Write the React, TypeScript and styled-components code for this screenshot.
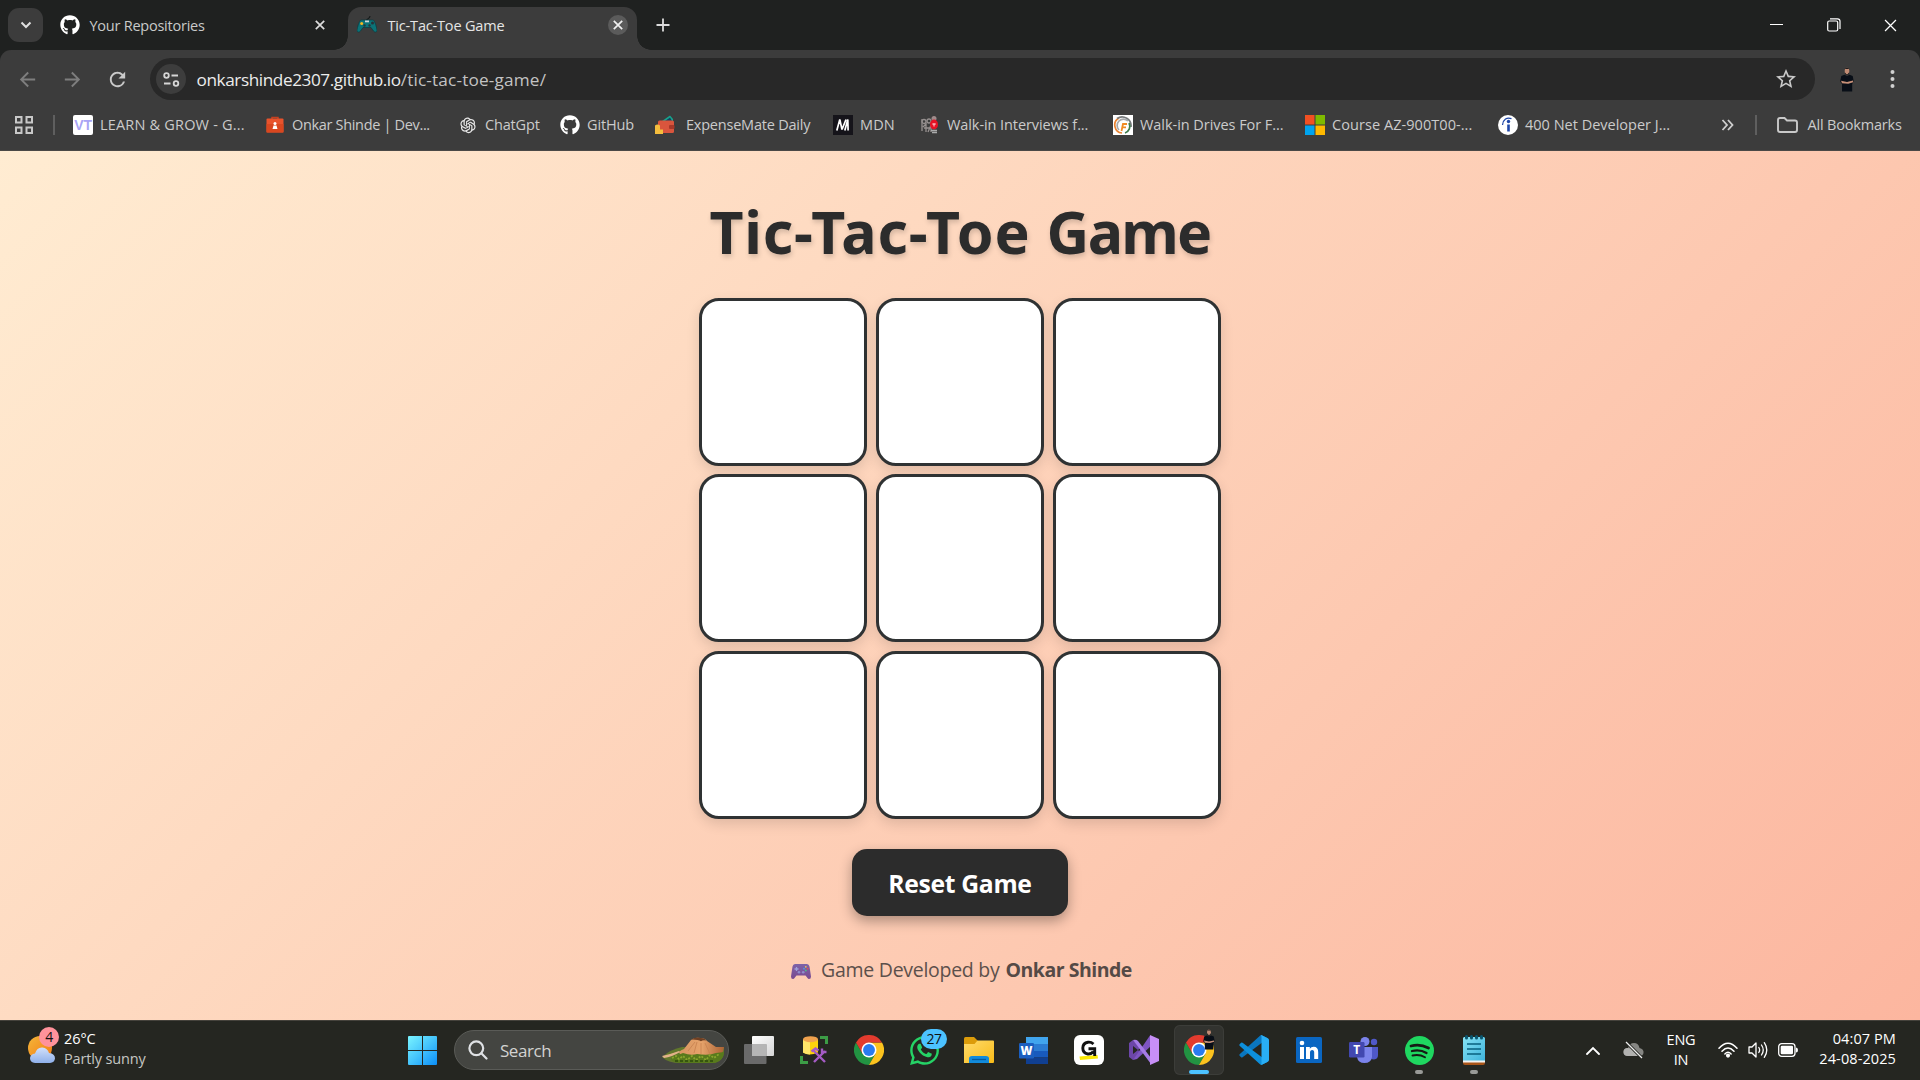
import React from "react";
import styled, { createGlobalStyle, css } from "styled-components";
import { FaGithub, FaWhatsapp } from "react-icons/fa6";
import { AiOutlineOpenAI } from "react-icons/ai";
import { MdArrowBack, MdArrowForward, MdRefresh, MdStarBorder } from "react-icons/md";

const ui = `"Segoe UI", "Open Sans", "Noto Sans", sans-serif`;

const GlobalStyle = createGlobalStyle`
  *, *::before, *::after { box-sizing: border-box; }
  body { margin: 0; overflow: hidden; font-family: ${ui}; background: #1f2120; }
  button { font-family: inherit; border: 0; padding: 0; background: none; color: inherit; }
  svg { display: block; flex: none; }
`;

const Screen = styled.div`
  width: 1920px;
  height: 1080px;
  display: flex;
  flex-direction: column;
  overflow: hidden;
`;

/* ---------- Tab strip ---------- */

const TabStrip = styled.header`
  height: 50px;
  flex: none;
  display: flex;
  align-items: flex-start;
  background: #1f2120;
  color: #dededc;
`;

const TabSearch = styled.button`
  width: 35px;
  height: 34px;
  margin: 8px 0 0 8px;
  border-radius: 11px;
  background: #3c3c3c;
  display: grid;
  place-items: center;
`;

const Tab = styled.div<{ $active?: boolean }>`
  position: relative;
  display: flex;
  align-items: center;
  font-size: 14.5px;
  ${(p) =>
    p.$active
      ? css`
          width: 289px;
          height: 43px;
          margin-top: 7px;
          padding: 0 9px 7px 9px;
          border-radius: 13px 13px 0 0;
          background: #3c3c3c;
          color: #e6e6e6;
          &::before,
          &::after {
            content: "";
            position: absolute;
            bottom: 0;
            width: 14px;
            height: 14px;
          }
          &::before {
            left: -14px;
            background: radial-gradient(circle at 0 0, transparent 13.5px, #3c3c3c 14px);
          }
          &::after {
            right: -14px;
            background: radial-gradient(circle at 100% 0, transparent 13.5px, #3c3c3c 14px);
          }
        `
      : css`
          width: 305px;
          height: 50px;
          padding: 0 23px 0 17px;
          color: #c9cac9;
        `}
`;

const TabTitle = styled.span<{ $left: number; $track: number }>`
  flex: 1;
  margin-left: ${(p) => p.$left}px;
  letter-spacing: ${(p) => p.$track}px;
  white-space: nowrap;
`;

const CloseTab = styled.button<{ $filled?: boolean }>`
  width: ${(p) => (p.$filled ? 20 : 10)}px;
  height: 20px;
  border-radius: 50%;
  background: ${(p) => (p.$filled ? "#5b5b5b" : "transparent")};
  display: grid;
  place-items: center;
`;

const NewTab = styled.button`
  width: 26px;
  height: 50px;
  margin-left: 13px;
  display: grid;
  place-items: center;
`;

const WindowControls = styled.div`
  margin-left: auto;
  display: flex;
  height: 50px;
  padding-right: 1px;
`;

const WindowButton = styled.button`
  width: 57px;
  display: grid;
  place-items: center;
`;

/* ---------- Toolbar ---------- */

const Chrome = styled.div`
  height: 101px;
  flex: none;
  background: #3c3c3c;
  border-radius: 11px 11px 0 0;
  border-bottom: 1px solid #4a4846;
`;

const Toolbar = styled.nav`
  height: 58px;
  display: flex;
  align-items: center;
  padding: 0 0 0 16px;
`;

const NavButton = styled.button<{ $dim?: boolean; $gap: number }>`
  width: 23px;
  height: 23px;
  margin-right: ${(p) => p.$gap}px;
  color: ${(p) => (p.$dim ? "#7e7e7e" : "#c9c9c9")};
  font-size: 23px;
`;

const AddressBar = styled.div`
  width: 1665px;
  height: 42px;
  border-radius: 21px;
  background: #282828;
  display: flex;
  align-items: center;
  padding: 0 17px 0 6px;
  color: #c9c9c9;
`;

const SiteInfo = styled.span`
  width: 30px;
  height: 30px;
  border-radius: 50%;
  background: #3d3d3d;
  display: grid;
  place-items: center;
`;

const Url = styled.span`
  flex: 1;
  margin-left: 10.5px;
  font-size: 17.2px;
  letter-spacing: 0.17px;
  color: #c3c3c3;
  b {
    font-weight: 400;
    color: #ececec;
    letter-spacing: -0.42px;
  }
`;

const Profile = styled.span`
  margin-left: 25px;
`;

const MenuDots = styled.span`
  margin-left: 36px;
`;

const Bookmarks = styled.div`
  height: 34px;
  display: flex;
  align-items: center;
  font-size: 14.5px;
  color: #cbcbcb;
  padding-left: 15px;
`;

const BarDivider = styled.i<{ $l: number; $r: number }>`
  width: 2px;
  height: 20px;
  margin: 0 ${(p) => p.$r}px 0 ${(p) => p.$l}px;
  background: #5f5f5f;
`;

const Bookmark = styled.span<{ $w: number; $gap?: number; $track: number }>`
  width: ${(p) => p.$w}px;
  display: flex;
  align-items: center;
  gap: ${(p) => p.$gap ?? 7}px;
  letter-spacing: ${(p) => p.$track}px;
  white-space: nowrap;
`;

const BookmarkLabel = styled.span`
  padding-bottom: 2px;
`;

/* ---------- Game page ---------- */

const Page = styled.main`
  height: 869px;
  flex: none;
  display: flex;
  flex-direction: column;
  align-items: center;
  background: linear-gradient(135deg, #ffecd2, #fcb69f);
`;

const Title = styled.h1`
  margin: 39px 0 0;
  height: 82px;
  line-height: 82px;
  font-family: "Segoe UI", "Noto Sans", sans-serif;
  font-size: 59px;
  font-weight: 700;
  letter-spacing: 0.8px;
  color: #2c2c2c;
  text-shadow: 1px 3px 5px rgba(0, 0, 0, 0.17);
  white-space: nowrap;
`;

const TitleEnd = styled.span`
  letter-spacing: -1.7px;
`;

const Board = styled.div`
  margin-top: 26px;
  display: grid;
  grid-template-columns: repeat(3, 168px);
  grid-auto-rows: 168px;
  gap: 8.4px 9px;
`;

const Cell = styled.button`
  border: 3px solid #2f3233;
  border-radius: 20px;
  background: #fff;
  box-shadow: 0 5px 13px rgba(0, 0, 0, 0.12);
`;

const ResetButton = styled.button`
  margin-top: 30px;
  width: 216px;
  height: 67px;
  padding-top: 2px;
  border-radius: 15px;
  background: #2c2c2c;
  color: #fff;
  font-size: 24.7px;
  font-weight: 700;
  letter-spacing: -0.32px;
  box-shadow: 0 5px 13px rgba(0, 0, 0, 0.32);
`;

const Credit = styled.p`
  margin: 40px 0 0;
  padding-left: 3px;
  height: 28px;
  display: flex;
  align-items: center;
  font-size: 19.5px;
  letter-spacing: -0.28px;
  color: #5c504b;
  white-space: nowrap;
  svg { margin: 4px 10px 0 0; }
  strong { margin-left: 6px; color: #554a46; letter-spacing: -0.49px; }
`;

/* ---------- Taskbar ---------- */

const Taskbar = styled.footer`
  height: 60px;
  flex: none;
  display: flex;
  align-items: center;
  background: #252621;
  box-shadow: inset 0 1px #45423c;
  color: #fff;
`;

const Weather = styled.div`
  width: 380px;
  padding-left: 27px;
  display: flex;
  align-items: center;
  gap: 8px;
`;

const WeatherText = styled.div`
  padding-bottom: 2px;
  font-size: 14.5px;
  line-height: 20px;
  letter-spacing: -0.15px;
  color: #c5c6c3;
  b { display: block; font-weight: 400; color: #fff; letter-spacing: -0.1px; }
`;

const Badge = styled.span<{ $w: number; $x: number; $y: number; $bg: string }>`
  position: absolute;
  left: ${(p) => p.$x}px;
  top: ${(p) => p.$y}px;
  width: ${(p) => p.$w}px;
  height: 20px;
  line-height: 20px;
  border-radius: 10px;
  text-align: center;
  font-size: 14px;
  letter-spacing: -0.4px;
  color: #111;
  background: ${(p) => p.$bg};
`;

const Glyph = styled.span`
  position: relative;
  display: block;
`;

const Start = styled.button`
  width: 74px;
  padding-left: 28px;
`;

const SearchBox = styled.div`
  width: 275px;
  height: 40px;
  border-radius: 20px;
  background: #444541;
  border: 1px solid #5a5b57;
  display: flex;
  align-items: center;
  padding: 0 3px 0 13px;
  font-size: 17px;
  letter-spacing: -0.45px;
  color: #d3d3d1;
  overflow: hidden;
`;

const SearchLabel = styled.span`
  flex: 1;
  margin-left: 12px;
`;

const Apps = styled.div`
  display: flex;
  gap: 5px;
  margin-left: 5px;
`;

const TaskApp = styled.span<{ $active?: boolean; $running?: boolean }>`
  position: relative;
  width: 50px;
  height: 50px;
  border-radius: 6px;
  display: grid;
  place-items: center;
  ${(p) => p.$active && "background: #32332f; box-shadow: inset 0 0 0 1px #3c3d39;"}
  ${(p) =>
    (p.$active || p.$running) &&
    css`
      &::after {
        content: "";
        position: absolute;
        bottom: 1px;
        left: ${p.$active ? 15 : 21}px;
        width: ${p.$active ? 20 : 8}px;
        height: 4px;
        border-radius: 2px;
        background: ${p.$active ? "#4cc2ff" : "#999a97"};
      }
    `}
`;

const AppAvatar = styled.span`
  position: absolute;
  left: 29px;
  top: 4px;
`;

const LetterTile = styled.span`
  width: 20px;
  height: 20px;
  background: #fff;
  color: #a9a4f5;
  font: 700 14px/1 "Liberation Sans", sans-serif;
  letter-spacing: -0.3px;
  display: grid;
  place-items: center;
  border-radius: 2px;
`;

const Tray = styled.div`
  margin-left: auto;
  display: flex;
  align-items: center;
  padding-right: 24px;
  font-size: 14.5px;
  line-height: 20px;
`;

const Spaced = styled.span<{ $l: number }>`
  margin-left: ${(p) => p.$l}px;
`;

const Language = styled.div`
  width: 30px;
  margin-left: 22px;
  text-align: center;
  letter-spacing: -0.25px;
  line-height: 20px;
`;

const Clock = styled.div`
  width: 80px;
  margin-left: 18px;
  padding-bottom: 2px;
  text-align: right;
  letter-spacing: 0.1px;
  white-space: nowrap;
`;

/* ---------- Drawings ---------- */

const Cross = ({ s = 10, w = 2, c = "#dcdcdc" }) => (
  <svg width={s} height={s} viewBox="0 0 10 10">
    <path d="M.8.8 9.2 9.2M9.2.8.8 9.2" stroke={c} strokeWidth={w} fill="none" />
  </svg>
);

const TealPad = () => (
  <svg width="20" height="20" viewBox="0 0 20 20">
    <path d="M10 6C8.500 4 13 4 13 1" stroke="#161b1b" strokeWidth="1.200" fill="none" />
    <path d="M4 5h12c1.500 0 4 8 4 10.500 0 2-2.500 2-3.500.5L14 12.500H6L3.500 16C2.500 17.500 0 17.500 0 15.500 0 13 2.500 5 4 5Z" fill="#0b7378" stroke="#0c3b40" strokeWidth=".7" />
    <circle cx="4.700" cy="8.500" r="1.500" fill="#f4b91f" />
    <circle cx="15.500" cy="8" r="1.500" fill="#263238" />
    <path d="M8 5.500h4v1.800H8z" fill="#cfd8d8" />
    <circle cx="7.500" cy="10.500" r="1.200" fill="#24383c" />
    <circle cx="12.500" cy="10.500" r="1.200" fill="#24383c" />
  </svg>
);

const Tune = () => (
  <svg width="17" height="15" viewBox="0 0 17 15" fill="none" stroke="#d6d6d6" strokeWidth="2">
    <circle cx="3.500" cy="3.500" r="2.300" strokeWidth="1.800" />
    <path d="M8.500 3.500H15M1 11.500h6.500" />
    <circle cx="13" cy="11.500" r="2.300" strokeWidth="1.800" />
  </svg>
);

const Person = ({ w = 14, h = 25 }) => (
  <svg width={w} height={h} viewBox="0 0 14 25">
    <ellipse cx="7" cy="4" rx="2.300" ry="3.300" fill="#c08b74" />
    <path d="M4.600 3C4.500 0 9.500 0 9.400 3L9 1.900H5ZM5 5.500 7 8l2-2.500V7L7 8.500 5 7Z" fill="#211c1c" />
    <path d="M4.500 7.800 1.300 9 .2 14.500 2 17v7.500h10.200V17l1.500-2.500-1-5.500L9.500 7.800 7 9Z" fill="#080e17" />
    <path d="m1 13.800 6 1.200 6-1.400.2 1.700-5 1.500L2 16.300Z" fill="#c68f78" />
  </svg>
);

const AppsGrid = () => (
  <svg width="18" height="18" viewBox="0 0 18 18" fill="none" stroke="#c8c8c8" strokeWidth="2">
    <path d="M1 1h5.500v5.500H1zM11.500 1H17v5.500h-5.500zM1 11.500h5.500V17H1zM11.500 11.500H17V17h-5.500z" />
  </svg>
);

const Portfolio = () => (
  <svg width="20" height="20" viewBox="0 0 20 20">
    <path d="M7 4V2.500h6V4" stroke="#c6401f" strokeWidth="1.500" fill="none" />
    <rect x="1.500" y="3.500" width="17" height="14" rx="1" fill="#e8532c" />
    <path d="M1.500 9h17v8.500h-17z" fill="#d9471f" />
    <circle cx="10" cy="8.500" r="1.500" fill="#fff" />
    <path d="M7.500 14 8.500 10.500h3l1 3.500Z" fill="#fff" />
  </svg>
);

const Wallet = () => (
  <svg width="20" height="20" viewBox="0 0 20 20">
    <path d="m7 6 8-5.500L18 4v3H6Z" fill="#16a58d" />
    <path d="m10 6 5-3.500 2 3.500Z" fill="#153f61" />
    <rect x="3" y="5.500" width="16" height="12.500" rx="1.500" fill="#d9553d" />
    <rect x="14" y="10" width="5.500" height="4" rx="1" fill="#a93829" />
    <path d="M0 10.500q2.500-2 5 0V19H0ZM4 14.500h4V19H4Z" fill="#f5bd3d" />
  </svg>
);

const Mdn = () => (
  <svg width="20" height="20" viewBox="0 0 20 20">
    <rect width="20" height="20" fill="#15141a" />
    <path d="m3.800 15.500 3-11 2.200 10 4-10M11.800 15.500l3-11 .3 11" stroke="#fff" strokeWidth="1.700" fill="none" strokeLinejoin="bevel" />
  </svg>
);

const Crowd = () => (
  <svg width="20" height="20" viewBox="0 0 20 20">
    <g fill="none" stroke="#96908f" strokeWidth="1.300">
      <circle cx="4" cy="6.500" r="2" /><circle cx="9" cy="6" r="2" />
      <path d="M2 16V4M6 17V9l-3 3M8 17l3-7v7M4 13h6" />
    </g>
    <circle cx="14" cy="3.500" r="2.500" fill="#9f8b8b" />
    <ellipse cx="14" cy="9.500" rx="4" ry="5" fill="#e51325" />
    <path d="M12.300 9h3.500M14 8.500v3" stroke="#fbdada" strokeWidth="1" />
    <path d="M11 15.500h6M12 17.500h5" stroke="#aaa" strokeWidth="1.400" />
  </svg>
);

const Swirl = () => (
  <svg width="20" height="20" viewBox="0 0 20 20">
    <rect width="20" height="20" fill="#fff" />
    <g fill="none" strokeWidth="1.700">
      <path d="M9 18A8 8 0 0 1 6 3" stroke="#e9822f" />
      <path d="M4 3.500A9 9 0 0 1 18 12" stroke="#76797b" />
      <path d="M16 8a7 7 0 0 1-4 10" stroke="#3e7b4c" />
      <path d="M6 15A6 6 0 0 1 15 6" stroke="#a6a9ab" />
    </g>
    <path d="M8.500 16 10 9h4M9.500 12.300h3.500" stroke="#f08a24" strokeWidth="1.800" fill="none" />
  </svg>
);

const MsLogo = () => (
  <svg width="20" height="20" viewBox="0 0 20 20">
    <path fill="#f25022" d="M0 0h9.500v9.500H0z" />
    <path fill="#7fba00" d="M10.500 0H20v9.500h-9.500z" />
    <path fill="#00a4ef" d="M0 10.500h9.500V20H0z" />
    <path fill="#ffb900" d="M10.500 10.500H20V20h-9.500z" />
  </svg>
);

const Indeed = () => (
  <svg width="20" height="20" viewBox="0 0 20 20">
    <circle cx="10" cy="10" r="10" fill="#fff" />
    <circle cx="10.500" cy="6.500" r="1.700" fill="#1f47a8" />
    <path d="M10.500 9.500v7" stroke="#1f47a8" strokeWidth="2.600" />
    <path d="M4.500 10C5 4.500 9 1.800 13.500 3.700" stroke="#1f47a8" strokeWidth="1.300" fill="none" />
  </svg>
);

const FolderLine = () => (
  <svg width="21" height="16" viewBox="0 0 21 16" fill="none" stroke="#c9c9c9" strokeWidth="1.900">
    <path d="M1 13V3Q1 1 3 1h4.500l2.500 2.500h8Q20 3.500 20 5.500V13q0 2-2 2H3q-2 0-2-2Z" />
  </svg>
);

const PurplePad = () => (
  <svg width="20" height="17" viewBox="0 0 20 17">
    <defs>
      <linearGradient id="pad" x2="0" y2="1">
        <stop stopColor="#7d63a8" /><stop offset="1" stopColor="#7a4a8f" />
      </linearGradient>
    </defs>
    <path d="M4 1h12q2 0 2.500 2.500L20 13.500q0 2.500-2 2.500-1 0-1.500-1L14.500 12.500h-9l-2 2.500Q3 16 2 16 0 16 0 13.500L1.500 3.500Q2 1 4 1Z" fill="url(#pad)" />
    <path d="M5.500 4v4M3.500 6h4" stroke="#9fa0da" strokeWidth="1.300" />
    <circle cx="8" cy="9.300" r="1.300" fill="#8f8ccd" /><circle cx="12.200" cy="9.300" r="1.300" fill="#8f8ccd" />
    <circle cx="14.800" cy="3.800" r=".9" fill="#e8c45c" /><circle cx="13" cy="5.700" r=".9" fill="#4d9be0" />
    <circle cx="16.600" cy="5.700" r=".9" fill="#e05050" /><circle cx="14.800" cy="7.500" r=".9" fill="#4ebd8a" />
  </svg>
);

const WeatherIcon = () => (
  <svg width="29" height="40" viewBox="0 0 29 40">
    <defs>
      <linearGradient id="sun" x2="1" y2="1"><stop stopColor="#f4b63a" /><stop offset="1" stopColor="#f47a12" /></linearGradient>
      <linearGradient id="cloud" x2="0" y2="1"><stop stopColor="#d2e0fa" /><stop offset="1" stopColor="#8fb0ea" /></linearGradient>
    </defs>
    <circle cx="13" cy="18" r="12" fill="url(#sun)" />
    <path d="M8 33q-5-.5-5-5 .5-4 5-4.500Q10 17 15.500 17.500q5 .5 6.500 5.500 6 .5 6 5.500-.5 4-5 4.500Z" fill="url(#cloud)" />
  </svg>
);

const WindowsLogo = () => (
  <svg width="29" height="29" viewBox="0 0 29 29">
    <defs>
      <linearGradient id="win" gradientUnits="userSpaceOnUse" x1="0" y1="0" x2="29" y2="29">
        <stop stopColor="#7af4ff" /><stop offset=".5" stopColor="#45c4fc" /><stop offset="1" stopColor="#0b8ef8" />
      </linearGradient>
    </defs>
    <path fill="url(#win)" d="M1 0h13v14H0V1Q0 0 1 0ZM15 0h13q1 0 1 1v13H15ZM0 15h14v14H1q-1 0-1-1ZM15 15h14v13q0 1-1 1H15Z" />
  </svg>
);

const SearchGlyph = () => (
  <svg width="20" height="20" viewBox="0 0 20 20" fill="none" stroke="#dfe1e4" strokeWidth="2.200">
    <circle cx="8.300" cy="8.300" r="6.900" /><path d="m13.300 13.300 5.200 5.200" strokeLinecap="round" />
  </svg>
);

const Hill = () => (
  <svg width="63" height="27" viewBox="0 0 63 27">
    <defs>
      <linearGradient id="hill" x2="1" y2="0"><stop stopColor="#d79561" /><stop offset=".5" stopColor="#e6a36b" /><stop offset="1" stopColor="#ab6234" /></linearGradient>
    </defs>
    <path d="M0 20q9-8 20-10h42v6q-1 8-10 10H18Q6 26 0 20Z" fill="#61772c" />
    <path d="M17 15q2-2 5-3l7-9q4-3 9-2 5 0 7 3l9 6 8 0q-1 8-6 9H24Q18 19 17 15Z" fill="url(#hill)" />
    <path d="M29 2.500q5-3 10-1.500 4 0 5 2.500-3-.8-5 .8-3-2-10-1.800Z" fill="#704023" />
    <path d="M35 5 32 16M39 6l0 11M43 6l5 11M33 5l-7 9" stroke="#c98351" strokeWidth=".9" />
    <path d="M9 22q1-4 7-4l5-2q8 3 14 1 12 2 19-1l8-1q0 8-9 11H18Q10 25 9 22Z" fill="#587a1c" />
    <path d="m10 21 4-2 3 3 4-3 4 4 5-4 4 4 5-4 5 4 4-5 4 3 5-4" stroke="#8ba62e" strokeWidth="1.800" strokeDasharray="2 1.500" fill="none" />
    <path d="M13 24h38" stroke="#36550f" strokeWidth="2" strokeDasharray="3 2" />
    <path d="M0 19q9-2 17-5l1 1Q10 20 2 21Z" fill="#e3b28a" />
  </svg>
);

const TaskView = () => (
  <svg width="30" height="28" viewBox="0 0 30 28">
    <defs><linearGradient id="tv" x2="1" y2="1"><stop stopColor="#fff" /><stop offset="1" stopColor="#d5d5d5" /></linearGradient></defs>
    <rect x="8" width="22" height="20" rx="1" fill="url(#tv)" />
    <rect y="8" width="22.500" height="20" rx="1" fill="#777" fillOpacity=".85" />
    <path d="M8 8h14.500v12H8z" fill="#b5b5b5" />
  </svg>
);

const SqlTools = () => (
  <svg width="28" height="28" viewBox="0 0 28 28">
    <path d="M3 3.500v13q6 4 15 0v-13Z" fill="#fdd20c" /><path d="M3 3.500v13q3 2 7 2V4Z" fill="#ffe469" />
    <ellipse cx="10.500" cy="3.200" rx="7.500" ry="3" fill="#f0a24e" />
    <path d="M20 1.500h6.500V8M1.500 20v6.500H8" stroke="#3c9c46" strokeWidth="3" fill="none" />
    <path d="m14 26 11-11M14 15l11 11M11.500 15.500l4-3 3 2M22 12.500v3.500h4.500" stroke="#a45bc4" strokeWidth="2.400" fill="none" />
  </svg>
);

const ChromeLogo = () => (
  <svg width="30" height="30" viewBox="0 0 48 48">
    <path d="M3.200 12A24 24 0 0 0 24 48L34.400 30 24 24 13.600 30Z" fill="#229342" />
    <path d="M34.400 30 24 48A24 24 0 0 0 44.800 12H24Z" fill="#fcc31e" />
    <path d="M3.200 12A24 24 0 0 1 44.800 12H24V24L13.600 30Z" fill="#e33b2e" />
    <circle cx="24" cy="24" r="12" fill="#fff" /><circle cx="24" cy="24" r="9.500" fill="#2a7bf0" />
  </svg>
);

const Explorer = () => (
  <svg width="30" height="27" viewBox="0 0 30 27">
    <defs><linearGradient id="fo" x2="1" y2="1"><stop stopColor="#ffdb6b" /><stop offset="1" stopColor="#f9bb18" /></linearGradient></defs>
    <path d="M0 1.500Q0 0 1.500 0H10l3.500 3.500V10H0Z" fill="#dc9c0a" />
    <path d="M0 7h10.500l3-3.500H29q1 0 1 1V25q0 1-1 1H0Z" fill="url(#fo)" />
    <path d="M5 26v-4.500Q5 19 8 19h14q3 0 3 2.500V26Z" fill="#128bdc" /><path d="M8 22.500h14" stroke="#075a9d" strokeWidth="1.300" />
  </svg>
);

const WordLogo = () => (
  <svg width="30" height="27" viewBox="0 0 30 27">
    <path d="M7 0h22v7H7z" fill="#41a5ee" /><path d="M7 7h22v7H7z" fill="#2b7cd3" />
    <path d="M7 14h22v6.500H7z" fill="#185abd" /><path d="M7 20.500h22V27H7z" fill="#103f91" />
    <rect y="6" width="15" height="15.500" rx="1.200" fill="#1b5fc0" />
    <text x="7.500" y="17.800" textAnchor="middle" fill="#fff" fontFamily="Open Sans" fontWeight="800" fontSize="11.500">W</text>
  </svg>
);

const GTile = () => (
  <svg width="30" height="30" viewBox="0 0 30 30">
    <rect width="30" height="30" rx="6" fill="#fff" />
    <path d="m5.500 21.500 18-1.500.5 3.500-18 1.500Z" fill="#fce903" />
    <path d="M19.500 9Q17 6.800 14 7.200 8.800 8 8.800 13t5 6q3.500.3 5.500-2.300M14.500 13.800h6M20.700 12.300V21" stroke="#111" strokeWidth="2.900" fill="none" />
  </svg>
);

const VisualStudio = () => (
  <svg width="30" height="30" viewBox="0 0 30 30">
    <path d="M4 5 0 8v14l4 3 8-7-3-3-5 4v-8l5 4 3-3Z" fill="#6c46a8" />
    <path d="M4 25 21 .500 23 10 8 24Z" fill="#7f55c2" />
    <path d="M4 5q3-1 5 1l13 17v6L4 5Z" fill="#a67be6" />
    <path d="m21 0 9 4v22l-9 4Z" fill="#c78ff7" />
  </svg>
);

const VsCode = () => (
  <svg width="30" height="30" viewBox="0 0 100 100">
    <path d="M96 11 76 1q-4-1-7 2L2 64q-2 3 0 5l5 5q2 2 5 0l81-61Z" fill="#0a76bf" />
    <path d="M96 89 76 99q-4 1-7-2L2 36q-2-3 0-5l5-5q2-2 5 0l81 61Z" fill="#0d8fdc" />
    <path d="M76 99q-4 1-7-2 6 4 6-4V7q0-8-6-4 3-3 7-2l20 10q4 2 4 6v66q0 4-4 6Z" fill="#29aef5" />
  </svg>
);

const LinkedIn = () => (
  <svg width="26" height="26" viewBox="0 0 26 26">
    <rect width="26" height="26" rx="1.500" fill="#0a66c2" />
    <circle cx="6" cy="6" r="2.300" fill="#fff" />
    <path d="M4 10h4v12H4zM10 10h3.800v1.700Q15 9.700 17.700 9.700q4.500 0 4.500 5.500V22h-4v-6.200q0-2.800-2-2.800-2.200 0-2.200 2.800V22h-4Z" fill="#fff" />
  </svg>
);

const Teams = () => (
  <svg width="30" height="27" viewBox="0 0 30 27">
    <circle cx="25" cy="5" r="3.200" fill="#5059c9" /><path d="M20 10h9v8q0 4-4 4.500-4 0-5-3Z" fill="#4f58c8" />
    <circle cx="16" cy="4.500" r="4.500" fill="#7b83eb" />
    <path d="M8 10h15v10q-1 6-7.500 6Q9 26 8 20Z" fill="#7b83eb" />
    <rect y="5" width="15.500" height="15.500" rx="1.200" fill="#4248b0" />
    <text x="7.700" y="17" textAnchor="middle" fill="#fff" fontFamily="Open Sans" fontWeight="700" fontSize="12">T</text>
  </svg>
);

const Spotify = () => (
  <svg width="29" height="29" viewBox="0 0 29 29">
    <circle cx="14.500" cy="14.500" r="14.500" fill="#1fd760" />
    <g fill="none" stroke="#161a15" strokeLinecap="round">
      <path d="M6 10q9-2.500 17.500 2" strokeWidth="2.800" /><path d="M7 15q8-2 14.500 2" strokeWidth="2.300" /><path d="M7.500 19.500q7-1.500 12.500 1.800" strokeWidth="1.900" />
    </g>
  </svg>
);

const Notepad = () => (
  <svg width="22" height="30" viewBox="0 0 22 30">
    <defs><linearGradient id="np" x2="1" y2="1"><stop stopColor="#86e2f4" /><stop offset="1" stopColor="#3fb4dc" /></linearGradient></defs>
    <path d="M0 26h22v2q0 2-2 2H2q-2 0-2-2Z" fill="#a85418" /><path d="M0 24h22v3.500H0z" fill="#f2f2f2" />
    <path d="M1 2h20l1 1v22.500H0V3Z" fill="url(#np)" />
    <path d="M4 9h14M4 14h14M4 19h14" stroke="#08607f" strokeWidth="1.700" />
    <g fill="#0b566f"><rect x="2" width="3" height="4.500" rx="1.500" /><rect x="7" width="3" height="4.500" rx="1.500" /><rect x="12" width="3" height="4.500" rx="1.500" /><rect x="17" width="3" height="4.500" rx="1.500" /></g>
  </svg>
);

const CloudOff = () => (
  <svg width="21" height="18" viewBox="0 0 21 18">
    <path d="M5 15Q.500 15 .500 11T5 7Q6.500 2 11 2q4.500 0 5.500 5Q21 8 20.500 12q-.5 3-4 3Z" fill="#868683" />
    <path d="M5 15Q.500 15 .500 11T5 7q3 0 5 3l5 5Z" fill="#b2b2b0" />
    <path d="m3 1 16 16" stroke="#252621" strokeWidth="3" /><path d="m3 1 16 16" stroke="#eee" strokeWidth="1.200" />
  </svg>
);

const Wifi = () => (
  <svg width="20" height="16" viewBox="0 0 20 16" fill="none" stroke="#fff" strokeWidth="1.500" strokeLinecap="round">
    <path d="M1 6.200Q10-3.700 19 6.200M4 9.200q6-6.400 12 0M6.900 12q3.100-3.300 6.200 0" /><circle cx="10" cy="13.600" r="1.300" fill="#fff" />
  </svg>
);

const Speaker = () => (
  <svg width="20" height="18" viewBox="0 0 20 18" fill="none" stroke="#fff" strokeWidth="1.300" strokeLinecap="round" strokeLinejoin="round">
    <path d="M1 6h3l4-4v14l-4-4H1ZM10.800 6.500q1.700 2.500 0 5M13.500 4q3.500 5 0 10M16.300 1.700q5 7.300 0 14.600" />
  </svg>
);

const Battery = () => (
  <svg width="20" height="14" viewBox="0 0 20 14">
    <rect x=".7" y=".7" width="16.300" height="12.600" rx="3" fill="none" stroke="#fff" strokeWidth="1.300" />
    <rect x="2.700" y="2.700" width="12.300" height="8.600" rx="1.300" fill="#fff" /><path d="M18 4.500q2 0 2 2.500t-2 2.500Z" fill="#fff" />
  </svg>
);

const bookmarks: { label: string; w: number; track: number; gap?: number; icon: React.ReactNode }[] = [
  { label: "LEARN & GROW - G...", w: 192, track: 0.19, icon: <LetterTile>VT</LetterTile> },
  { label: "Onkar Shinde | Dev...", w: 193, track: -0.33, icon: <Portfolio /> },
  { label: "ChatGpt", w: 102, track: -0.17, icon: <AiOutlineOpenAI size={20} color="#e6e6e6" /> },
  { label: "GitHub", w: 95, track: -0.15, icon: <FaGithub size={20} color="#fff" /> },
  { label: "ExpenseMate Daily", w: 178, track: -0.22, gap: 11, icon: <Wallet /> },
  { label: "MDN", w: 87, track: 0.1, icon: <Mdn /> },
  { label: "Walk-in Interviews f...", w: 193, track: -0.08, icon: <Crowd /> },
  { label: "Walk-in Drives For F...", w: 192, track: -0.05, icon: <Swirl /> },
  { label: "Course AZ-900T00-...", w: 193, track: 0.06, icon: <MsLogo /> },
  { label: "400 Net Developer J...", w: 223, track: 0, icon: <Indeed /> },
];

export default function App() {
  return (
    <Screen>
      <GlobalStyle />
      <TabStrip>
        <TabSearch>
          <svg width="12" height="8" viewBox="0 0 12 8"><path d="m1.500 1.500 4.500 4.500 4.500-4.500" stroke="#e0e0e0" strokeWidth="2" fill="none" /></svg>
        </TabSearch>
        <Tab>
          <FaGithub size={20} color="#fff" />
          <TabTitle $left={9.5} $track={-0.24}>Your Repositories</TabTitle>
          <CloseTab><Cross w={1.7} /></CloseTab>
        </Tab>
        <Tab $active>
          <TealPad />
          <TabTitle $left={10.5} $track={-0.17}>Tic-Tac-Toe Game</TabTitle>
          <CloseTab $filled><Cross w={1.7} c="#f0f0f0" /></CloseTab>
        </Tab>
        <NewTab>
          <svg width="14" height="14" viewBox="0 0 14 14"><path d="M7 .500v13M.500 7h13" stroke="#dcdcdc" strokeWidth="1.800" /></svg>
        </NewTab>
        <WindowControls>
          <WindowButton><svg width="13" height="3" viewBox="0 0 13 3"><path d="M0 .500h13" stroke="#fff" /></svg></WindowButton>
          <WindowButton>
            <svg width="14" height="14" viewBox="0 0 14 14" fill="none" stroke="#fff" strokeWidth="1.200">
              <rect x=".7" y="3" width="10" height="10" rx="1.500" /><path d="M3 .8h7.500q2.500 0 2.500 2.500V11" />
            </svg>
          </WindowButton>
          <WindowButton><Cross s={13} w={0.95} c="#fff" /></WindowButton>
        </WindowControls>
      </TabStrip>

      <Chrome>
        <Toolbar>
          <NavButton $dim $gap={22}><MdArrowBack /></NavButton>
          <NavButton $dim $gap={22}><MdArrowForward /></NavButton>
          <NavButton $gap={21}><MdRefresh /></NavButton>
          <AddressBar>
            <SiteInfo><Tune /></SiteInfo>
            <Url><b>onkarshinde2307.github.io</b>/tic-tac-toe-game/</Url>
            <MdStarBorder size={24} />
          </AddressBar>
          <Profile><Person /></Profile>
          <MenuDots>
            <svg width="5" height="20" viewBox="0 0 5 20" fill="#d0d0d0"><circle cx="2.500" cy="3" r="2" /><circle cx="2.500" cy="10" r="2" /><circle cx="2.500" cy="17" r="2" /></svg>
          </MenuDots>
        </Toolbar>
        <Bookmarks>
          <AppsGrid />
          <BarDivider $l={20} $r={18} />
          {bookmarks.map((b) => (
            <Bookmark key={b.label} $w={b.w} $gap={b.gap} $track={b.track}>
              {b.icon}
              <BookmarkLabel>{b.label}</BookmarkLabel>
            </Bookmark>
          ))}
          <svg width="13" height="12" viewBox="0 0 13 12"><path d="m1.500 1 4.500 5-4.500 5M7 1l4.500 5L7 11" stroke="#d0d0d0" strokeWidth="1.800" fill="none" /></svg>
          <BarDivider $l={21} $r={20} />
          <Bookmark $w={130} $gap={9.5} $track={-0.19}>
            <FolderLine />
            <BookmarkLabel>All Bookmarks</BookmarkLabel>
          </Bookmark>
        </Bookmarks>
      </Chrome>

      <Page>
        <Title>Tic-Tac-Toe <TitleEnd>Game</TitleEnd></Title>
        <Board>
          {Array.from({ length: 9 }, (_, i) => <Cell key={i} />)}
        </Board>
        <ResetButton>Reset Game</ResetButton>
        <Credit><PurplePad />Game Developed by <strong>Onkar Shinde</strong></Credit>
      </Page>

      <Taskbar>
        <Weather>
          <Glyph><WeatherIcon /><Badge $w={20} $x={12} $y={-3} $bg="#ff929b">4</Badge></Glyph>
          <WeatherText><b>26°C</b>Partly sunny</WeatherText>
        </Weather>
        <Start><WindowsLogo /></Start>
        <SearchBox><SearchGlyph /><SearchLabel>Search</SearchLabel><Hill /></SearchBox>
        <Apps>
          <TaskApp><TaskView /></TaskApp>
          <TaskApp><SqlTools /></TaskApp>
          <TaskApp><ChromeLogo /></TaskApp>
          <TaskApp><FaWhatsapp size={33} color="#25d366" /><Badge $w={26} $x={22} $y={4} $bg="#4cc2ff">27</Badge></TaskApp>
          <TaskApp><Explorer /></TaskApp>
          <TaskApp><WordLogo /></TaskApp>
          <TaskApp><GTile /></TaskApp>
          <TaskApp><VisualStudio /></TaskApp>
          <TaskApp $active><ChromeLogo /><AppAvatar><Person w={12} h={21} /></AppAvatar></TaskApp>
          <TaskApp><VsCode /></TaskApp>
          <TaskApp><LinkedIn /></TaskApp>
          <TaskApp><Teams /></TaskApp>
          <TaskApp $running><Spotify /></TaskApp>
          <TaskApp $running><Notepad /></TaskApp>
        </Apps>
        <Tray>
          <svg width="14" height="9" viewBox="0 0 14 9"><path d="m1 8 6-6 6 6" stroke="#fff" strokeWidth="1.800" fill="none" strokeLinecap="round" /></svg>
          <Spaced $l={23}><CloudOff /></Spaced>
          <Language>ENG<br />IN</Language>
          <Spaced $l={22}><Wifi /></Spaced>
          <Spaced $l={10}><Speaker /></Spaced>
          <Spaced $l={10}><Battery /></Spaced>
          <Clock>04:07 PM<br />24-08-2025</Clock>
        </Tray>
      </Taskbar>
    </Screen>
  );
}
